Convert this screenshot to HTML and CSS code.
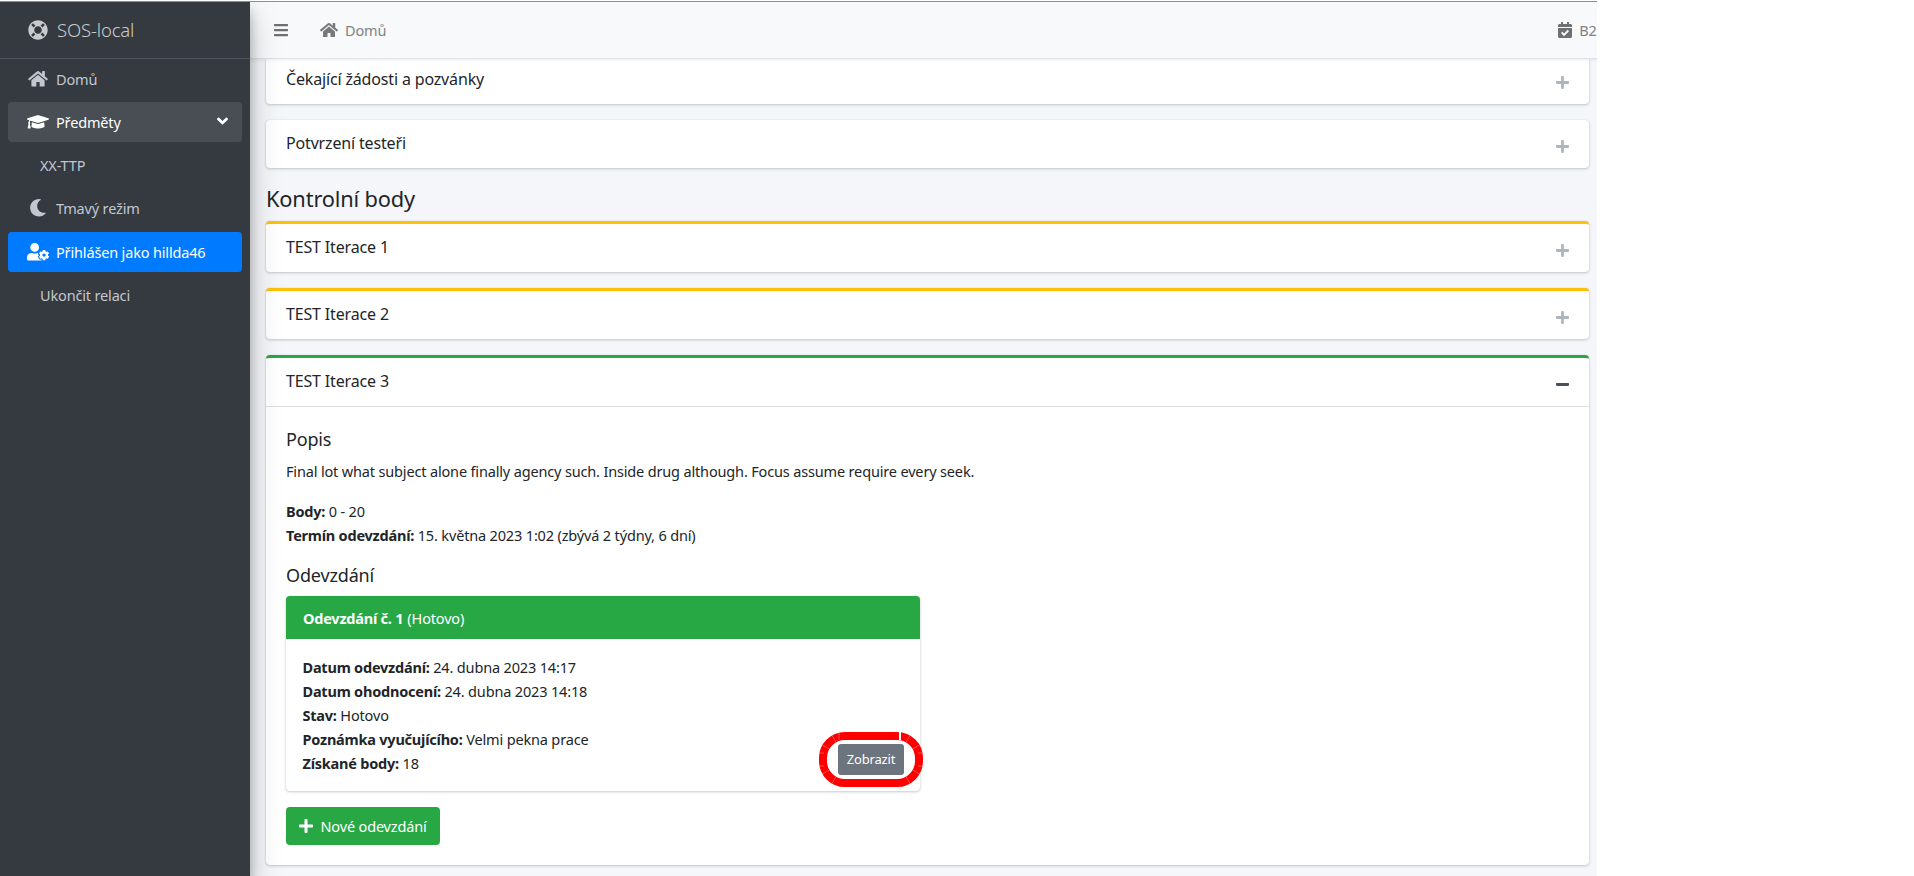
FILE: index.html
```html
<!DOCTYPE html>
<html lang="cs">
<head>
<meta charset="utf-8">
<title>SOS-local</title>
<link rel="stylesheet" href="styles.css">
</head>
<body>
<div class="app">
  <aside class="sidebar">
    <div class="brand">
      <svg class="brand-icon" viewBox="0 0 512 512"><path d="M256 8C119.033 8 8 119.033 8 256s111.033 248 248 248 248-111.033 248-248S392.967 8 256 8zm173.696 119.559l-63.399 63.399c-10.987-18.559-26.67-34.252-45.255-45.255l63.399-63.399a218.396 218.396 0 0 1 45.255 45.255zM256 352c-53.019 0-96-42.981-96-96s42.981-96 96-96 96 42.981 96 96-42.981 96-96 96zM127.559 82.304l63.399 63.399c-18.559 10.987-34.252 26.67-45.255 45.255l-63.399-63.399a218.372 218.372 0 0 1 45.255-45.255zM82.304 384.441l63.399-63.399c10.987 18.559 26.67 34.252 45.255 45.255l-63.399 63.399a218.396 218.396 0 0 1-45.255-45.255zm302.137 45.255l-63.399-63.399c18.559-10.987 34.252-26.67 45.255-45.255l63.399 63.399a218.403 218.403 0 0 1-45.255 45.255z"/></svg>
      <span class="brand-text">SOS-local</span>
    </div>
    <nav class="side-nav">
      <a class="side-link">
        <span class="side-icon"><svg viewBox="0 0 576 512"><path d="M280.37 148.26L96 300.11V464a16 16 0 0 0 16 16l112.06-.29a16 16 0 0 0 15.92-16V368a16 16 0 0 1 16-16h64a16 16 0 0 1 16 16v95.64a16 16 0 0 0 16 16.05L464 480a16 16 0 0 0 16-16V300L295.67 148.26a12.19 12.19 0 0 0-15.3 0zM571.6 251.47L488 182.56V44.05a12 12 0 0 0-12-12h-56a12 12 0 0 0-12 12v72.61L318.47 43a48 48 0 0 0-61 0L4.34 251.47a12 12 0 0 0-1.6 16.9l25.5 31A12 12 0 0 0 45.15 301l235.22-193.74a12.19 12.19 0 0 1 15.3 0L530.9 301a12 12 0 0 0 16.9-1.6l25.5-31a12 12 0 0 0-1.7-16.93z"/></svg></span>
        Domů
      </a>
      <a class="side-link is-open">
        <span class="side-icon"><svg viewBox="0 0 640 512"><path d="M622.34 153.2L343.4 67.5c-15.2-4.67-31.6-4.67-46.79 0L17.66 153.2c-23.54 7.23-23.54 38.36 0 45.59l48.63 14.94c-10.67 13.19-17.23 29.28-17.88 46.9C38.78 266.15 32 276.11 32 288c0 10.78 5.68 19.85 13.86 25.65L20.33 428.53C18.11 438.52 25.71 448 35.94 448h56.11c10.24 0 17.84-9.48 15.62-19.47L82.14 313.65C90.32 307.85 96 298.78 96 288c0-11.57-6.47-21.25-15.66-26.87.76-15.02 8.44-28.3 20.69-36.72L296.6 284.5c9.06 2.78 26.44 6.25 46.79 0l278.95-85.7c23.55-7.24 23.55-38.36 0-45.6zM352.79 315.09c-28.53 8.76-52.84 3.92-65.59 0l-145.02-44.55L128 384c0 35.35 85.96 64 192 64s192-28.65 192-64l-14.18-113.47-145.03 44.56z"/></svg></span>
        Předměty
        <svg class="side-chevron" viewBox="0 0 320 512"><path d="M143 352.3L7 216.3c-9.4-9.4-9.4-24.6 0-33.9l22.6-22.6c9.4-9.4 24.6-9.4 33.9 0l96.4 96.4 96.4-96.4c9.4-9.4 24.6-9.4 33.9 0l22.6 22.6c9.4 9.4 9.4 24.6 0 33.9l-136 136c-9.2 9.4-24.4 9.4-33.8 0z"/></svg>
      </a>
      <a class="side-link side-sub">XX-TTP</a>
      <a class="side-link">
        <span class="side-icon"><svg viewBox="0 0 512 512"><path d="M283.211 512c78.962 0 151.079-35.925 198.857-94.792 7.068-8.708-.639-21.43-11.562-19.35-124.203 23.654-238.262-71.576-238.262-196.954 0-72.222 38.662-138.635 101.498-174.394 9.686-5.512 7.25-20.197-3.756-22.23A258.156 258.156 0 0 0 283.211 0c-141.309 0-256 114.511-256 256 0 141.309 114.511 256 256 256z"/></svg></span>
        Tmavý režim
      </a>
      <a class="side-link is-active">
        <span class="side-icon"><svg viewBox="0 0 640 512"><path d="M610.5 373.3c2.6-14.1 2.6-28.5 0-42.6l25.8-14.9c3-1.7 4.3-5.2 3.3-8.5-6.7-21.6-18.2-41.2-33.2-57.4-2.3-2.5-6-3.1-9-1.4l-25.8 14.9c-10.9-9.3-23.4-16.5-36.9-21.3v-29.8c0-3.4-2.4-6.4-5.7-7.1-22.3-5-45-4.8-66.2 0-3.3.7-5.7 3.7-5.7 7.1v29.8c-13.5 4.8-26 12-36.9 21.3l-25.8-14.9c-2.9-1.7-6.7-1.1-9 1.4-15 16.2-26.5 35.8-33.2 57.4-1 3.3.4 6.8 3.3 8.5l25.8 14.9c-2.6 14.1-2.6 28.5 0 42.6l-25.8 14.9c-3 1.7-4.3 5.2-3.3 8.5 6.7 21.6 18.2 41.1 33.2 57.4 2.3 2.5 6 3.1 9 1.4l25.8-14.9c10.9 9.3 23.4 16.5 36.9 21.3v29.8c0 3.4 2.4 6.4 5.7 7.1 22.3 5 45 4.8 66.2 0 3.3-.7 5.7-3.7 5.7-7.1v-29.8c13.5-4.8 26-12 36.9-21.3l25.8 14.9c2.9 1.7 6.7 1.1 9-1.4 15-16.2 26.5-35.8 33.2-57.4 1-3.3-.4-6.8-3.3-8.5l-25.8-14.9zM496 400.5c-26.8 0-48.5-21.8-48.5-48.5s21.8-48.5 48.5-48.5 48.5 21.8 48.5 48.5-21.7 48.5-48.5 48.5zM224 256c70.7 0 128-57.3 128-128S294.7 0 224 0 96 57.3 96 128s57.3 128 128 128zm201.2 226.5c-2.3-1.2-4.6-2.6-6.8-3.9l-7.9 4.6c-6 3.4-12.8 5.3-19.6 5.3-10.9 0-21.4-4.6-28.9-12.6-18.3-19.8-32.3-43.9-40.2-69.6-5.5-17.7 1.9-36.4 17.9-45.7l7.9-4.6c-.1-2.6-.1-5.2 0-7.8l-7.9-4.6c-16-9.2-23.4-28-17.9-45.7.9-2.9 2.2-5.8 3.2-8.7-3.8-.3-7.5-1.2-11.4-1.2h-16.7c-22.2 10.2-46.9 16-72.9 16s-50.6-5.8-72.9-16h-16.7C60.2 288 0 348.2 0 422.4V464c0 26.5 21.5 48 48 48h352c10.1 0 19.5-3.2 27.2-8.5-1.2-3.8-2-7.7-2-11.8v-9.2z"/></svg></span>
        Přihlášen jako hillda46
      </a>
      <a class="side-link side-sub">Ukončit relaci</a>
    </nav>
  </aside>

  <div class="main">
    <header class="topbar">
      <svg class="top-bars" viewBox="0 0 448 512"><path d="M16 132h416c8.837 0 16-7.163 16-16V76c0-8.837-7.163-16-16-16H16C7.163 60 0 67.163 0 76v40c0 8.837 7.163 16 16 16zm0 160h416c8.837 0 16-7.163 16-16v-40c0-8.837-7.163-16-16-16H16c-8.837 0-16 7.163-16 16v40c0 8.837 7.163 16 16 16zm0 160h416c8.837 0 16-7.163 16-16v-40c0-8.837-7.163-16-16-16H16c-8.837 0-16 7.163-16 16v40c0 8.837 7.163 16 16 16z"/></svg>
      <svg class="top-home" viewBox="0 0 576 512"><path d="M280.37 148.26L96 300.11V464a16 16 0 0 0 16 16l112.06-.29a16 16 0 0 0 15.92-16V368a16 16 0 0 1 16-16h64a16 16 0 0 1 16 16v95.64a16 16 0 0 0 16 16.05L464 480a16 16 0 0 0 16-16V300L295.67 148.26a12.19 12.19 0 0 0-15.3 0zM571.6 251.47L488 182.56V44.05a12 12 0 0 0-12-12h-56a12 12 0 0 0-12 12v72.61L318.47 43a48 48 0 0 0-61 0L4.34 251.47a12 12 0 0 0-1.6 16.9l25.5 31A12 12 0 0 0 45.15 301l235.22-193.74a12.19 12.19 0 0 1 15.3 0L530.9 301a12 12 0 0 0 16.9-1.6l25.5-31a12 12 0 0 0-1.7-16.93z"/></svg>
      <span class="top-text">Domů</span>
      <div class="top-right">
        <svg class="top-cal" viewBox="0 0 448 512"><path d="M436 160H12c-6.627 0-12-5.373-12-12v-36c0-26.51 21.49-48 48-48h48V12c0-6.627 5.373-12 12-12h40c6.627 0 12 5.373 12 12v52h128V12c0-6.627 5.373-12 12-12h40c6.627 0 12 5.373 12 12v52h48c26.51 0 48 21.49 48 48v36c0 6.627-5.373 12-12 12zM12 192h424c6.627 0 12 5.373 12 12v260c0 26.51-21.49 48-48 48H48c-26.51 0-48-21.49-48-48V204c0-6.627 5.373-12 12-12zm333.296 95.947l-28.169-28.398c-4.667-4.705-12.265-4.736-16.97-.068L194.12 364.665l-45.98-46.352c-4.667-4.705-12.266-4.736-16.971-.068l-28.397 28.17c-4.705 4.667-4.736 12.265-.068 16.97l82.601 83.269c4.667 4.705 12.265 4.736 16.97.068l142.953-141.805c4.705-4.667 4.736-12.265.068-16.97z"/></svg>
        <span class="top-text">B221</span>
      </div>
    </header>

    <main class="content">
      <section class="card card-clipped">
        <div class="card-header">
          <h3 class="card-title">Čekající žádosti a pozvánky</h3>
          <svg class="tool-icon" viewBox="0 0 448 512"><path d="M416 208H272V64c0-17.67-14.33-32-32-32h-32c-17.67 0-32 14.33-32 32v144H32c-17.67 0-32 14.33-32 32v32c0 17.67 14.33 32 32 32h144v144c0 17.67 14.33 32 32 32h32c17.67 0 32-14.33 32-32V304h144c17.67 0 32-14.33 32-32v-32c0-17.67-14.33-32-32-32z"/></svg>
        </div>
      </section>
      <section class="card">
        <div class="card-header">
          <h3 class="card-title">Potvrzení testeři</h3>
          <svg class="tool-icon" viewBox="0 0 448 512"><path d="M416 208H272V64c0-17.67-14.33-32-32-32h-32c-17.67 0-32 14.33-32 32v144H32c-17.67 0-32 14.33-32 32v32c0 17.67 14.33 32 32 32h144v144c0 17.67 14.33 32 32 32h32c17.67 0 32-14.33 32-32V304h144c17.67 0 32-14.33 32-32v-32c0-17.67-14.33-32-32-32z"/></svg>
        </div>
      </section>

      <h2 class="section-title">Kontrolní body</h2>

      <section class="card card-warning">
        <div class="card-header">
          <h3 class="card-title">TEST Iterace 1</h3>
          <svg class="tool-icon" viewBox="0 0 448 512"><path d="M416 208H272V64c0-17.67-14.33-32-32-32h-32c-17.67 0-32 14.33-32 32v144H32c-17.67 0-32 14.33-32 32v32c0 17.67 14.33 32 32 32h144v144c0 17.67 14.33 32 32 32h32c17.67 0 32-14.33 32-32V304h144c17.67 0 32-14.33 32-32v-32c0-17.67-14.33-32-32-32z"/></svg>
        </div>
      </section>
      <section class="card card-warning">
        <div class="card-header">
          <h3 class="card-title">TEST Iterace 2</h3>
          <svg class="tool-icon" viewBox="0 0 448 512"><path d="M416 208H272V64c0-17.67-14.33-32-32-32h-32c-17.67 0-32 14.33-32 32v144H32c-17.67 0-32 14.33-32 32v32c0 17.67 14.33 32 32 32h144v144c0 17.67 14.33 32 32 32h32c17.67 0 32-14.33 32-32V304h144c17.67 0 32-14.33 32-32v-32c0-17.67-14.33-32-32-32z"/></svg>
        </div>
      </section>
      <section class="card card-success">
        <div class="card-header has-line">
          <h3 class="card-title">TEST Iterace 3</h3>
          <svg class="tool-icon tool-dark" viewBox="0 0 448 512"><path d="M416 208H32c-17.67 0-32 14.33-32 32v32c0 17.67 14.33 32 32 32h384c17.67 0 32-14.33 32-32v-32c0-17.67-14.33-32-32-32z"/></svg>
        </div>
        <div class="card-body">
          <h5 class="sub-title">Popis</h5>
          <p class="para">Final lot what subject alone finally agency such. Inside drug although. Focus assume require every seek.</p>
          <p class="para para-meta"><b>Body:</b> 0 - 20<br><b>Termín odevzdání:</b> 15. května 2023 1:02 (zbývá 2 týdny, 6 dní)</p>
          <h5 class="sub-title sub-second">Odevzdání</h5>
          <div class="submission">
            <div class="submission-head"><b>Odevzdání č. 1</b> (Hotovo)</div>
            <div class="submission-body">
              <div class="submission-lines">
                <div><b>Datum odevzdání:</b> 24. dubna 2023 14:17</div>
                <div><b>Datum ohodnocení:</b> 24. dubna 2023 14:18</div>
                <div><b>Stav:</b> Hotovo</div>
                <div><b>Poznámka vyučujícího:</b> Velmi pekna prace</div>
                <div><b>Získané body:</b> 18</div>
              </div>
              <div class="btn-wrap">
                <a class="btn-show">Zobrazit</a>
                <svg class="annot" viewBox="0 0 104 55">
                  <rect class="annot-ring" x="4" y="4" width="96" height="47" rx="22"/>
                  <path class="annot-notch" d="M87 10.4L91 3.5M93.6 17L100.5 13M17 10.4L13 3.5M10.4 17L3.5 13M87 44.6L91 51.5M93.6 38L100.5 42M17 44.6L13 51.5M10.4 38L3.5 42M99 21H104M99 34H104M0 21H5M0 34H5M20 0V8"/>
                  <rect class="annot-gap" x="80" y="0" width="2" height="8"/>
                </svg>
              </div>
            </div>
          </div>
          <a class="btn-new">
            <svg class="btn-plus" viewBox="0 0 448 512"><path d="M416 208H272V64c0-17.67-14.33-32-32-32h-32c-17.67 0-32 14.33-32 32v144H32c-17.67 0-32 14.33-32 32v32c0 17.67 14.33 32 32 32h144v144c0 17.67 14.33 32 32 32h32c17.67 0 32-14.33 32-32V304h144c17.67 0 32-14.33 32-32v-32c0-17.67-14.33-32-32-32z"/></svg>
            Nové odevzdání
          </a>
        </div>
      </section>
    </main>
  </div>
</div>
</body>
</html>
```
FILE: styles.css
```css
* { box-sizing: border-box; }
html, body { margin: 0; height: 100%; background: #fff; overflow: hidden; }
body { font-family: "Noto Sans", "Liberation Sans", sans-serif; font-size: 14.5px; line-height: 24px; color: #212529; letter-spacing: -0.16px; }
b { letter-spacing: -0.22px; }

.app { width: 1597px; height: 876px; display: flex; border-top: 1px solid #fff; overflow: hidden; position: relative; background: #f4f6f9; }
.app::before { content: ""; position: absolute; left: 0; right: 0; top: 0; height: 1px; background: #8f8f8f; z-index: 9; }

.sidebar { width: 250px; flex: none; background: #343a40; box-shadow: 0 14px 28px rgba(0,0,0,.25), 0 10px 10px rgba(0,0,0,.22); position: relative; z-index: 5; padding-top: 1px; }
.brand { height: 57px; display: flex; align-items: center; padding-left: 28px; border-bottom: 1px solid #4b545c; color: rgba(255,255,255,.8); }
.brand-icon { width: 20px; height: 20px; fill: #c8cbce; flex: none; }
.brand-text { margin-left: 9px; font-size: 18.5px; font-weight: 300; color: #c9cbcd; }

.side-nav { padding: 0 8px; display: flex; flex-direction: column; gap: 3px; }
.side-link { height: 40px; display: flex; align-items: center; padding-left: 18px; border-radius: 4px; color: #c2c7d0; position: relative; }
.side-icon { width: 30px; flex: none; display: flex; }
.side-icon svg { height: 17.6px; width: 24px; fill: #c2c7d0; }
.side-sub { padding-left: 32px; }
.is-open { background: rgba(255,255,255,.1); color: #fff; }
.is-open .side-icon svg { fill: #fff; }
.is-active { background: #007bff; color: #fff; margin-top: 1px; }
.is-active .side-icon svg { fill: #fff; }
.side-chevron { position: absolute; right: 14px; top: 10px; width: 11px; height: 18px; fill: #fff; }

.main { flex: 1; min-width: 0; display: flex; flex-direction: column; overflow: hidden; }
.topbar { height: 57px; flex: none; background: #f8f9fa; display: flex; align-items: center; padding-left: 24px; border-bottom: 1px solid #dee2e6; margin-top: 1px; margin-right: -80px; padding-right: 64px; position: relative; z-index: 3; box-shadow: 0 1px 3px rgba(0,0,0,.08); }
.top-bars { width: 14px; height: 16px; fill: #6e7072; flex: none; }
.top-home { width: 18px; height: 16px; fill: #77797b; flex: none; margin-left: 32px; margin-right: 7px; }
.top-text { color: #808284; }
.top-right { margin-left: auto; display: flex; align-items: center; gap: 7px; }
.top-cal { width: 14px; height: 16px; fill: #6e7072; flex: none; }

.content { flex: 1; min-height: 0; padding: 0 8px 0 16px; }
.card { background: #fff; border-radius: 4px; margin-bottom: 16px; box-shadow: 0 0 1px rgba(0,0,0,.125), 0 1px 3px rgba(0,0,0,.2); }
.card-clipped { border-radius: 0 0 4px 4px; }
.card-clipped .card-header { height: 45px; padding-bottom: 6px; }
.card-warning { border-top: 3px solid #ffc107; }
.card-success { border-top: 3px solid #28a745; margin-bottom: 0; }
.card-header { height: 48px; padding: 0 20px 2px; display: flex; align-items: center; justify-content: space-between; }
.has-line { height: 49px; border-bottom: 1px solid rgba(0,0,0,.125); }
.card-title { margin: 0; font-size: 16px; font-weight: 400; line-height: 24px; }
.tool-icon { width: 13px; height: 15px; fill: #adb5bd; margin-top: 7px; }
.tool-dark { fill: #495057; }
.section-title { margin: 0 0 6px; font-size: 21.8px; font-weight: 400; line-height: 30px; height: 31px; }

.card-body { padding: 20px; }
.sub-title { margin: 0 0 8px; font-size: 18px; font-weight: 400; line-height: 24px; }
.para { margin: 0 0 16px; }
.sub-second { margin-bottom: 9px; }

.submission { width: 634px; border-radius: 4px; background: #fff; box-shadow: 0 0 1px rgba(0,0,0,.125), 0 1px 3px rgba(0,0,0,.2); margin-bottom: 16px; }
.submission-head { height: 43px; background: #28a745; color: #fff; display: flex; align-items: center; padding: 0 17px; gap: 4px; border-radius: 4px 4px 0 0; }
.submission-body { padding: 16px 16px 16px 16.5px; height: 152px; display: flex; justify-content: space-between; align-items: flex-end; }
.btn-wrap { position: relative; }
.btn-show { display: block; width: 66px; height: 31px; background: #6c757d; color: #fff; border-radius: 3px; font-size: 13px; line-height: 31px; text-align: center; }
.annot { position: absolute; left: -19px; top: -12px; width: 104px; height: 55px; }
.annot-ring { fill: none; stroke: #f00; stroke-width: 8; }
.annot-notch { fill: none; stroke: #fff; stroke-width: .5; opacity: .6; }
.annot-gap { fill: #fff; }
.btn-new { display: inline-flex; align-items: center; width: 154px; height: 38px; background: #28a745; color: #fff; border-radius: 4px; padding-left: 13px; }
.btn-plus { width: 14px; height: 16px; fill: #fff; margin-right: 7.5px; flex: none; }
```
